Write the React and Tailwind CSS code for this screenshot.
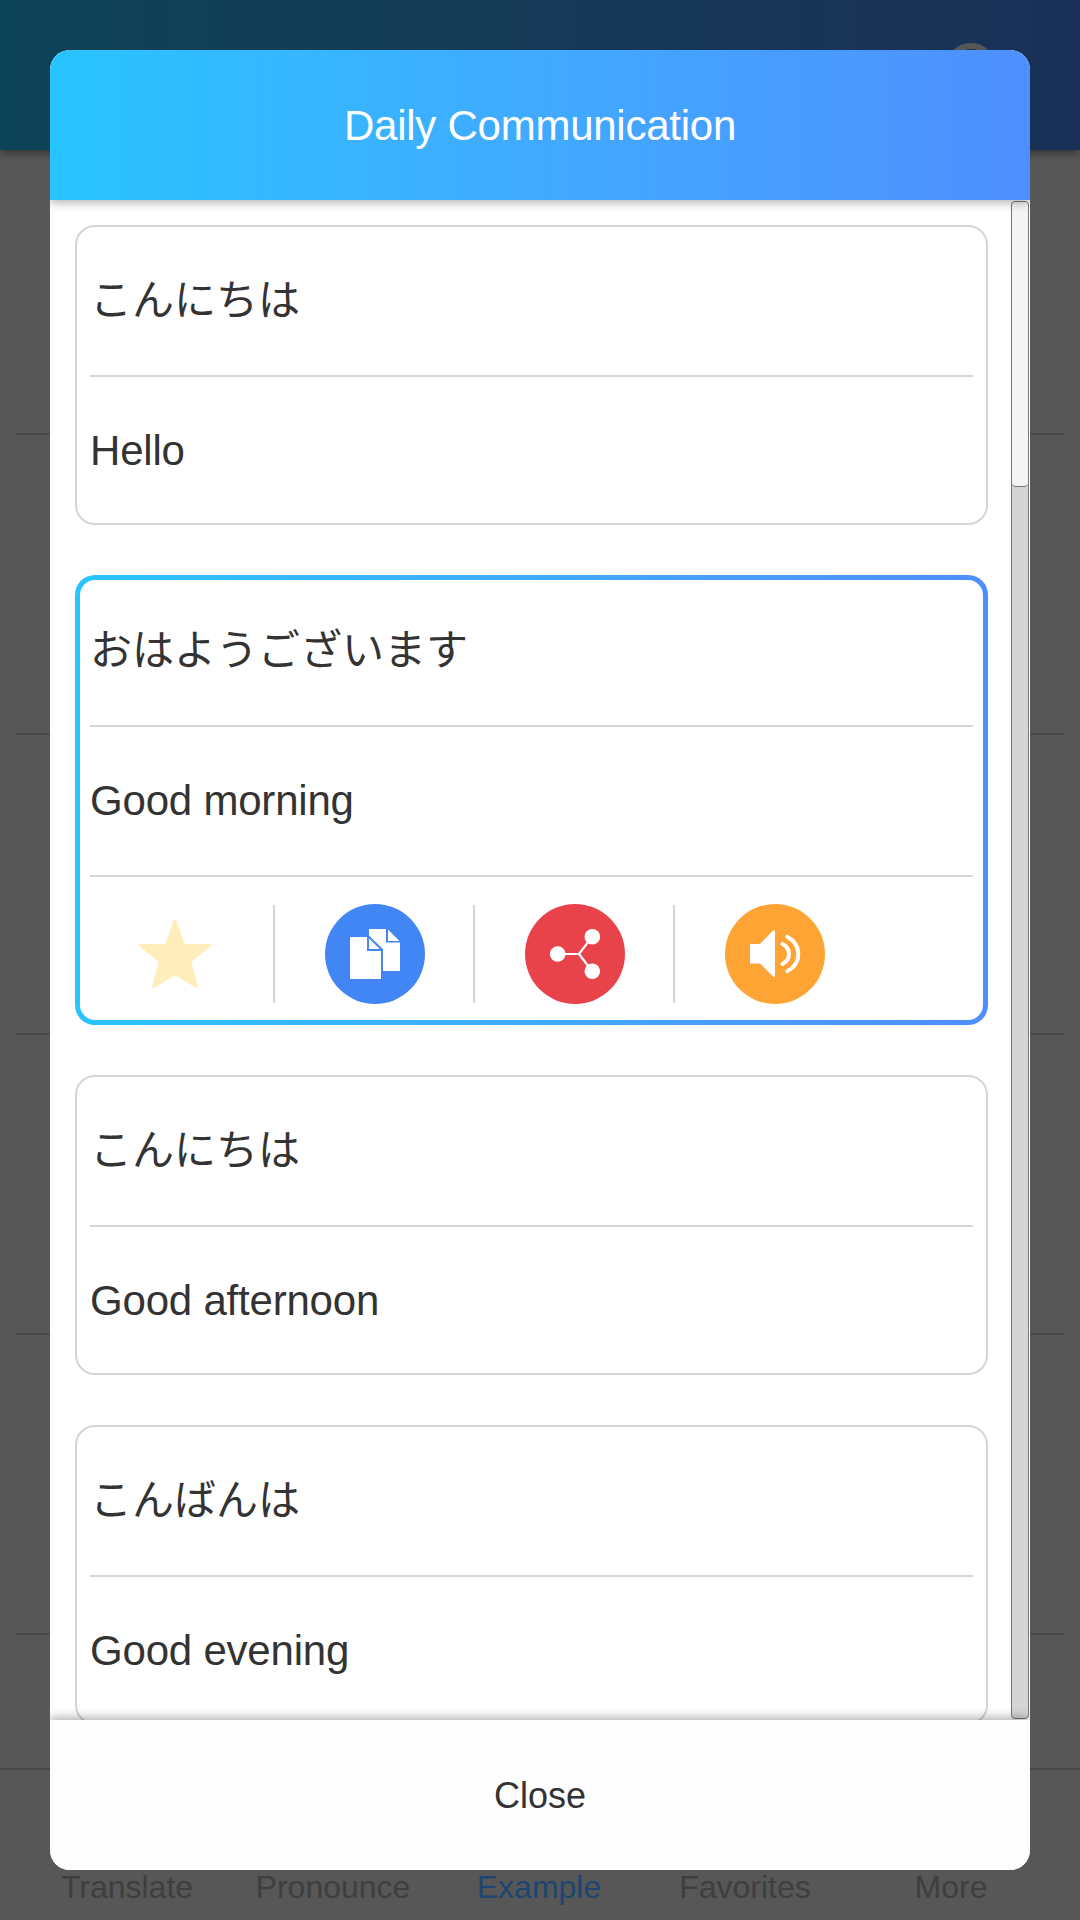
import React, { useState } from 'react';

const phrases = [
  { id: 1, source: 'こんにちは', target: 'Hello' },
  { id: 2, source: 'おはようございます', target: 'Good morning' },
  { id: 3, source: 'こんにちは', target: 'Good afternoon' },
  { id: 4, source: 'こんばんは', target: 'Good evening' },
];

const tabs = ['Translate', 'Pronounce', 'Example', 'Favorites', 'More'];

function StarIcon() {
  return (
    <svg viewBox="0 0 100 100" className="w-[100px] h-[100px]">
      <path
        d="M50 17 L58.5 41.5 H84.5 L64.5 57 L71.5 82.5 L50 69.5 L28.5 82.5 L35.5 57 L15.5 41.5 H41.5 Z"
        fill="#ffedbb"
        stroke="#ffedbb"
        strokeWidth="3"
        strokeLinejoin="round"
      />
    </svg>
  );
}

function CopyIcon() {
  return (
    <svg viewBox="0 0 100 100" className="w-[100px] h-[100px]">
      <circle cx="50" cy="50" r="50" fill="#4285f5" />
      <path d="M44 25 H61 V38.5 H75 V67 H44 Z" fill="#fff" />
      <path d="M63 25.5 L74.5 37 H63 Z" fill="#fff" />
      <path d="M25 33 H44 L56 45.5 V75 H25 Z" fill="#fff" />
      <path d="M43 31.5 V46 H57 V67.5 M43 32 L57.3 46" fill="none" stroke="#4285f5" strokeWidth="1.9" />
    </svg>
  );
}

function ShareIcon() {
  return (
    <svg viewBox="0 0 100 100" className="w-[100px] h-[100px]">
      <circle cx="50" cy="50" r="50" fill="#e8434a" />
      <path d="M33 50 H54 L67 33 M54 50 L67 67" fill="none" stroke="#fff" strokeWidth="2.2" />
      <circle cx="32.7" cy="50" r="7.8" fill="#fff" />
      <circle cx="67.3" cy="32.7" r="7.8" fill="#fff" />
      <circle cx="67.3" cy="67.3" r="7.8" fill="#fff" />
    </svg>
  );
}

function SoundIcon() {
  return (
    <svg viewBox="0 0 100 100" className="w-[100px] h-[100px]">
      <circle cx="50" cy="50" r="50" fill="#fea434" />
      <path d="M25 40 H35 L48 26.5 Q50 25.5 50 28 V71 Q50 74 48 72.5 L35 59.5 H25 Z" fill="#fff" />
      <path d="M57.5 40 Q64 43.5 64 50 Q64 56.5 57.5 60" fill="none" stroke="#fff" strokeWidth="4" strokeLinecap="round" />
      <path d="M62.3 32.7 Q73.3 38.5 73.3 50 Q73.3 61.5 62.3 67.3" fill="none" stroke="#fff" strokeWidth="4" strokeLinecap="round" />
    </svg>
  );
}

const actions = [StarIcon, CopyIcon, ShareIcon, SoundIcon];

function PhraseCard({ phrase, active, onSelect }) {
  return (
    <div
      onClick={onSelect}
      className={
        active
          ? 'shrink-0 rounded-[20px] p-[5px] bg-linear-to-r from-[#27c4ff] to-[#4e8fff]'
          : 'shrink-0 rounded-[20px] border-2 border-[#d5d5d5] bg-white'
      }
    >
      <div className={active ? 'rounded-[15px] bg-white px-[10px] text-[42px]' : 'px-[13px] text-[42px]'}>
        <p className={active ? 'flex h-[145px] items-center pb-[5px]' : 'flex h-[148px] items-center pb-[2px]'}>
          {phrase.source}
        </p>
        <p
          className={
            active
              ? 'flex h-[150px] items-center border-t-2 border-[#d5d5d5] pb-[2px] tracking-[-0.2px]'
              : 'flex h-[148px] items-center border-t-2 border-[#d5d5d5] tracking-[-0.2px]'
          }
        >
          {phrase.target}
        </p>
        {active && (
          <div className="flex h-[145px] items-center border-t-2 border-[#d5d5d5] pt-[11px]">
            {actions.map((Icon, i) => (
              <div
                key={i}
                className={
                  i === 0
                    ? 'flex h-[98px] w-[185px] items-center justify-center border-r-2 border-[#d5d5d5] pr-[13px]'
                    : i < actions.length - 1
                      ? 'flex h-[98px] w-[200px] items-center justify-center border-r-2 border-[#d5d5d5] pl-[2px]'
                      : 'flex h-[98px] w-[200px] items-center justify-center'
                }
              >
                <Icon />
              </div>
            ))}
          </div>
        )}
      </div>
    </div>
  );
}

function Page() {
  return (
    <div className="flex h-[1920px] flex-col bg-white">
      <header className="z-10 flex h-[150px] shrink-0 justify-end bg-linear-to-r from-[#27c4ff] to-[#4e8fff] pt-[43px] pr-[84px] shadow-[0_2px_10px_rgba(0,0,0,0.5)]">
        <div className="h-[50px] w-[50px] rounded-full border-[6px] border-white"></div>
      </header>
      <div className="h-[1618px] overflow-hidden px-[15px]">
        {[0, 1, 2, 3, 4].map((row) => (
          <div
            key={row}
            className={row === 0 ? 'h-[285px] border-b-2 border-[#d5d5d5]' : 'h-[300px] border-b-2 border-[#d5d5d5]'}
          ></div>
        ))}
      </div>
      <nav className="flex h-[152px] shrink-0 border-t-2 border-[#d5d5d5] pr-[26px] pl-[24px]">
        {tabs.map((tab) => (
          <div
            key={tab}
            className={
              tab === 'Example'
                ? 'flex flex-1 items-end justify-center pb-[15px] text-[32px] leading-[36px]'
                : 'flex flex-1 items-end justify-center pb-[15px] text-[32px] leading-[36px] text-[#b8b8b8]'
            }
          >
            {/* current tab stays readable above the dimmed backdrop */}
            {tab === 'Example' ? <span className="relative z-30 text-[#1e4671]">{tab}</span> : tab}
          </div>
        ))}
      </nav>
    </div>
  );
}

function App() {
  const [selected, setSelected] = useState(2);

  return (
    <div className="relative h-[1920px] w-[1080px] overflow-hidden font-['Liberation_Sans','Noto_Sans_CJK_JP',sans-serif] text-[#333333]">
      <Page />

      <div className="absolute inset-0 z-20 bg-black/66 p-[50px]">
        <div className="flex h-[1820px] flex-col overflow-hidden rounded-[20px] bg-white">
          <div className="z-10 flex h-[150px] shrink-0 items-center justify-center bg-linear-to-r from-[#27c4ff] to-[#4e8fff] text-[42px] tracking-[-0.25px] text-white shadow-[0_2px_10px_rgba(0,0,0,0.35)]">
            Daily Communication
          </div>

          <div className="flex h-[1520px] shrink-0 overflow-hidden">
            <div className="flex w-[961px] flex-col gap-[50px] overflow-hidden py-[25px] pr-[23px] pl-[25px]">
              {phrases.map((phrase) => (
                <PhraseCard
                  key={phrase.id}
                  phrase={phrase}
                  active={phrase.id === selected}
                  onSelect={() => setSelected(phrase.id)}
                />
              ))}
            </div>
            {/* Scroll track */}
            <div className="mt-px h-[1518px] w-[18px] rounded-[4px] border border-[#777777] bg-[#d5d5d5]">
              <div className="h-[285px] rounded-[4px] border-b border-[#777777] bg-[#f4f4f4]"></div>
            </div>
          </div>

          <button
            type="button"
            className="z-10 flex h-[150px] shrink-0 items-center justify-center bg-[#fefefe] pt-[2px] text-[36px] shadow-[0_-2px_10px_rgba(0,0,0,0.35)]"
          >
            Close
          </button>
        </div>
      </div>
    </div>
  );
}

export default App;
